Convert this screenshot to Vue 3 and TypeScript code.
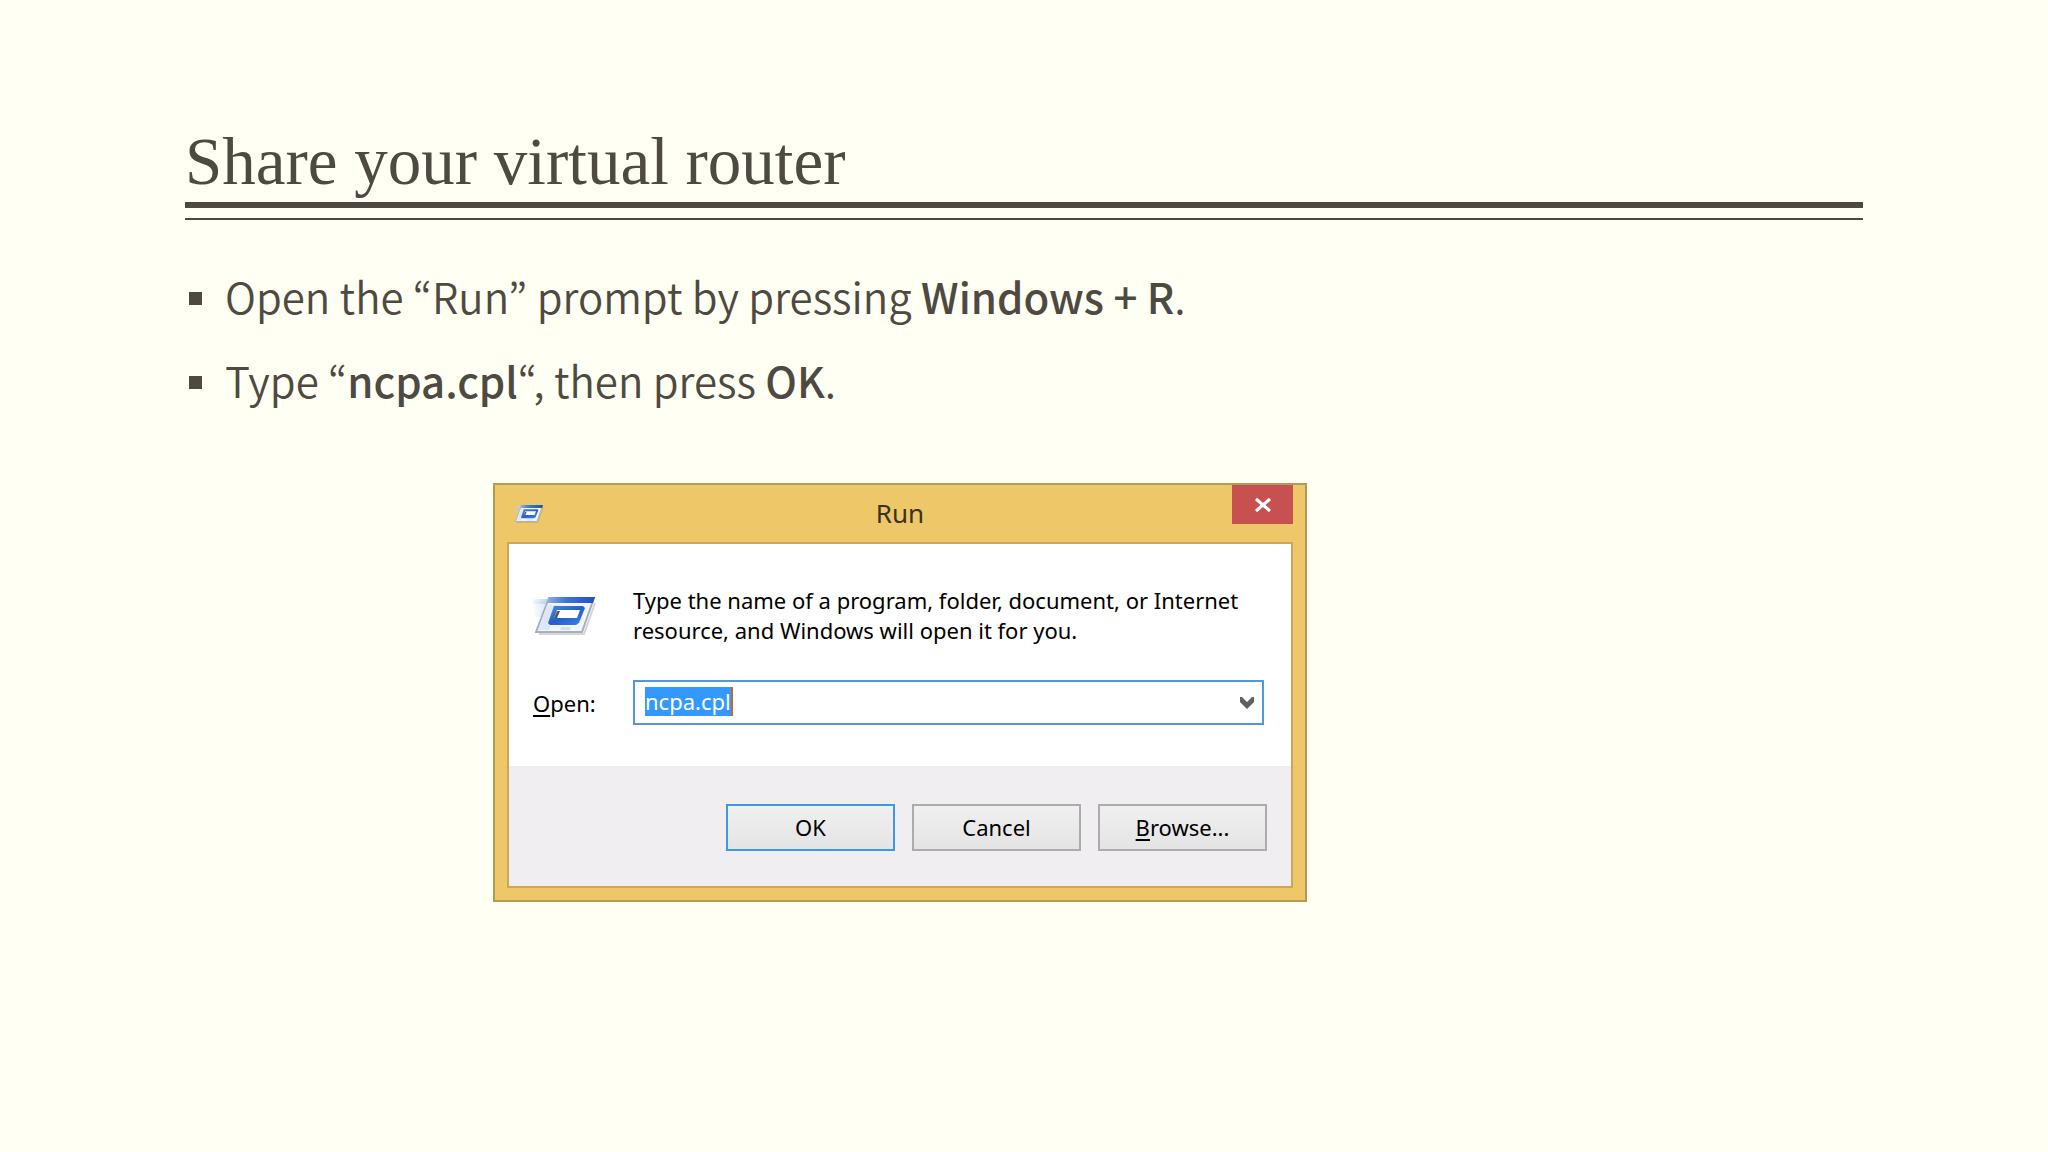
<script setup lang="ts">
import { ref } from 'vue'

const command = ref('ncpa.cpl')
</script>

<template>
  <main class="slide">
    <header class="heading">
      <h1>Share your virtual router</h1>
    </header>

    <ul class="steps">
      <li>Open the “Run” prompt by pressing <strong>Windows + R</strong>.</li>
      <li>Type “<strong>ncpa.cpl</strong>“, then press <strong>OK</strong>.</li>
    </ul>

    <section class="dialog" aria-label="Run">
      <div class="titlebar">
        <svg class="app-icon" viewBox="0 0 64 40" aria-hidden="true">
          <use href="#run-icon" />
        </svg>
        <h2>Run</h2>
        <button class="close" type="button" aria-label="Close">
          <svg viewBox="0 0 18 16" aria-hidden="true">
            <path d="M2 2 16 14M16 2 2 14" fill="none" stroke="#fff" stroke-width="3" />
          </svg>
        </button>
      </div>

      <form class="client" @submit.prevent>
        <div class="content">
          <svg class="run-icon" viewBox="0 0 64 40" aria-hidden="true">
            <defs>
              <linearGradient id="bar" x1="0" x2="1" y1="0" y2="0">
                <stop offset="0" stop-color="#8fb0e6" />
                <stop offset="0.4" stop-color="#3f74d2" />
                <stop offset="1" stop-color="#1f52bd" />
              </linearGradient>
              <linearGradient id="pane" x1="0" x2="1" y1="0" y2="1">
                <stop offset="0" stop-color="#4a88e4" />
                <stop offset="0.5" stop-color="#2560ca" />
                <stop offset="1" stop-color="#3c86ea" />
              </linearGradient>
              <linearGradient id="trail" x1="0" x2="1" y1="0" y2="0">
                <stop offset="0" stop-color="#b9cff2" stop-opacity="0.1" />
                <stop offset="1" stop-color="#b9cff2" />
              </linearGradient>
            </defs>
            <g id="run-icon">
              <path d="M0 6H17L10 22H1Z" fill="url(#trail)" opacity="0.6" />
              <path d="M0 4H17L15 9H0Z" fill="url(#trail)" />
              <path d="M6 39H51L62 8" fill="none" stroke="#777" stroke-opacity="0.3" stroke-width="2" />
              <path d="M16 3H61L49 37H3Z" fill="#f1f5fd" stroke="#a9afb9" stroke-width="2" />
              <path d="M14 10H25L16 35H5Z" fill="#dce7fa" />
              <path d="M28 32H38L37 35H27Z" fill="#cfdff8" />
              <path d="M16 2H62L60 8H14Z" fill="url(#bar)" />
              <path d="M21 11H50L52 13 46 28 43 30H17L15 28Z" fill="url(#pane)" />
              <path d="M24 15H47L44 23H21Z" fill="#fff" />
              <path d="M24 16H27L24 23H21Z" fill="#555" />
            </g>
          </svg>
          <p>
            Type the name of a program, folder, document, or Internet<br />
            resource, and Windows will open it for you.
          </p>
          <label for="command"><u>O</u>pen:</label>
          <div class="combo">
            <input id="command" v-model="command" type="text" autocomplete="off" spellcheck="false" />
            <button class="drop" type="button" aria-label="Show recent commands">
              <svg viewBox="0 0 16 14" aria-hidden="true">
                <path d="M1 1 3 1 8 6 13 1 15 1V6L8 13 1 6Z" fill="#606060" />
              </svg>
            </button>
          </div>
        </div>

        <div class="actions">
          <button class="action primary" type="submit">OK</button>
          <button class="action" type="button">Cancel</button>
          <button class="action" type="button"><u>B</u>rowse...</button>
        </div>
      </form>
    </section>
  </main>
</template>

<style>
body {
  margin: 0;
  background: #fffff4;
}
</style>

<style scoped>
*,
*::before {
  box-sizing: border-box;
}

.slide {
  min-height: 100vh;
  padding: 122px 185px 0;
  color: #4e4a41;
  background: #fffff4;
}

.heading {
  padding-bottom: 10px;
  border-bottom: 2px solid #4e4a41;
}

h1 {
  margin: 0;
  padding-bottom: 2px;
  border-bottom: 6px solid #4e4a41;
  font: 400 67px/78px "Liberation Serif", serif;
}

.steps {
  margin: 34px 0 0;
  padding: 0;
  list-style: none;
  font: 350 42px/84px "Noto Sans CJK KR", "Noto Sans", sans-serif;
}

.steps li {
  display: flex;
  align-items: center;
  white-space: pre;
}

.steps li::before {
  content: "";
  width: 13px;
  height: 13px;
  margin: 4px 23px 0 4px;
  background: #4e4a41;
}

.steps strong {
  font-weight: 500;
}

.dialog {
  width: 814px;
  max-width: 100%;
  margin: 61px 0 0 308px;
  padding: 0 12px 12px;
  border: 2px solid #b39a55;
  background: #eec868;
  color: #000;
  font: 22px/30px "Noto Sans", sans-serif;
}

.titlebar {
  display: grid;
  grid-template-columns: 61px 1fr 61px;
  align-items: center;
  height: 57px;
}

.app-icon {
  width: 30px;
  height: 19px;
  margin-left: 7px;
}

h2 {
  margin: 0;
  padding-bottom: 2px;
  font-size: 26px;
  font-weight: 400;
  text-align: center;
  color: #3b3223;
}

.close {
  display: flex;
  align-self: start;
  align-items: center;
  justify-content: center;
  height: 39px;
  padding: 0;
  border: 0;
  background: #c75050;
}

.close svg {
  width: 18px;
  height: 16px;
}

.client {
  border: 2px solid #cfa656;
  background: #f0eef0;
}

.content {
  display: grid;
  grid-template-columns: 100px 1fr;
  row-gap: 35px;
  align-items: center;
  padding: 41px 27px 41px 24px;
  background: #fff;
}

.run-icon {
  width: 64px;
  height: 40px;
}

p {
  margin: 0;
  white-space: nowrap;
}

u {
  text-decoration-thickness: 2px;
  text-underline-offset: 3px;
}

.combo {
  display: flex;
  align-items: center;
  justify-content: space-between;
  height: 45px;
  padding: 0 7px 2px 10px;
  border: 2px solid #5097dc;
  background: #fff;
}

.combo input {
  field-sizing: content;
  height: 29px;
  padding: 0 0 2px;
  border: 0;
  border-right: 2px solid #b86a45;
  border-radius: 0;
  outline: 0;
  background: #3399ff;
  color: #fff;
  font: inherit;
}

.drop {
  display: flex;
  padding: 2px 0 0;
  border: 0;
  background: none;
}

.drop svg {
  width: 16px;
  height: 14px;
}

.actions {
  display: flex;
  justify-content: flex-end;
  gap: 17px;
  padding: 38px 24px 35px;
}

.action {
  width: 169px;
  height: 47px;
  padding: 0 0 2px;
  border: 2px solid #acacac;
  background: linear-gradient(#f0f0f0, #e5e4e5);
  color: #000;
  font: inherit;
}

.action.primary {
  border-color: #3f97ea;
}
</style>
